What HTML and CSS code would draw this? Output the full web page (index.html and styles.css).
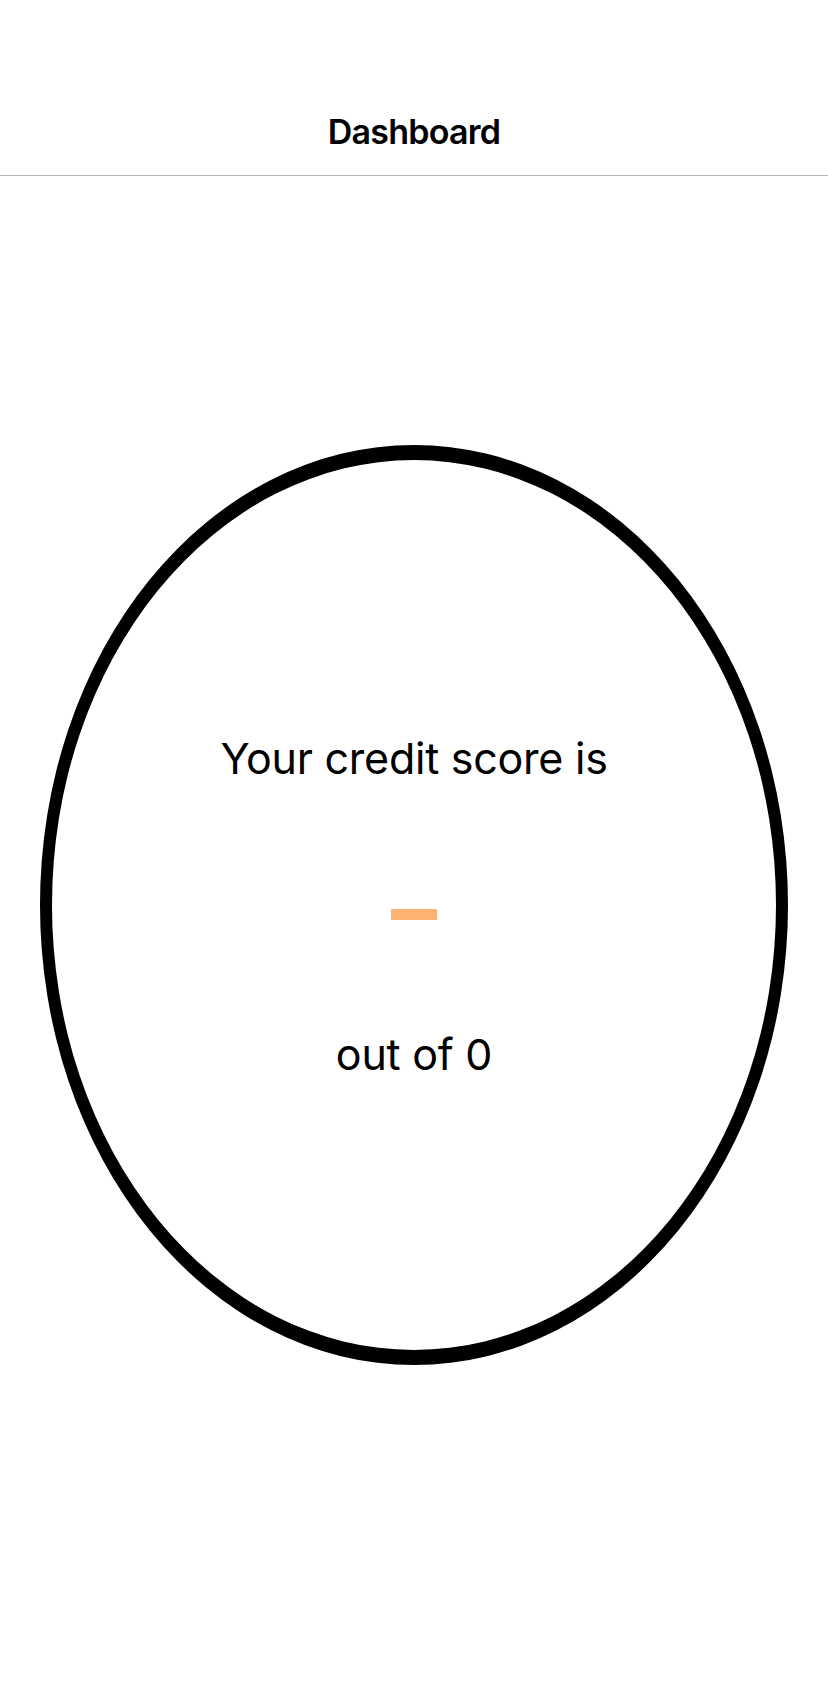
FILE: index.html
```html
<!DOCTYPE html>
<html lang="en">
<head>
<meta charset="utf-8">
<title>Dashboard</title>
<link rel="stylesheet" href="styles.css">
</head>
<body>
<header class="nav">
  <h1 class="nav-title">Dashboard</h1>
</header>
<main class="content">
  <div class="score-ring">
    <p class="score-label">Your credit score is</p>
    <div class="score-value" aria-label="no score"></div>
    <p class="score-max">out of 0</p>
  </div>
</main>
</body>
</html>
```

FILE: styles.css
```css
html, body {
  margin: 0;
  padding: 0;
  background: #fff;
}
body {
  width: 828px;
  height: 1704px;
  font-family: "Inter", "Roboto", "Liberation Sans", sans-serif;
  color: #000;
}
.nav {
  height: 176px;
  box-sizing: border-box;
  padding-top: 88px;
  display: flex;
  align-items: center;
  justify-content: center;
  border-bottom: 1px solid #b5b5b5;
}
.nav-title {
  margin: 0;
  font-size: 34px;
  font-weight: 600;
  line-height: 88px;
  letter-spacing: -0.75px;
}
.content {
  display: flex;
  justify-content: center;
  padding-top: 269px;
}
.score-ring {
  width: 748px;
  height: 920px;
  box-sizing: border-box;
  border-style: solid;
  border-color: #000;
  border-width: 15px 12px;
  border-radius: 50%;
  display: flex;
  flex-direction: column;
  align-items: center;
  padding-top: 272px;
}
.score-label,
.score-max {
  margin: 0;
  font-size: 43px;
  line-height: 52px;
  font-weight: 400;
  letter-spacing: -0.25px;
}
.score-value {
  width: 46px;
  height: 11px;
  background: #ffb373;
  margin-top: 125px;
}
.score-max {
  margin-top: 108px;
}
```
